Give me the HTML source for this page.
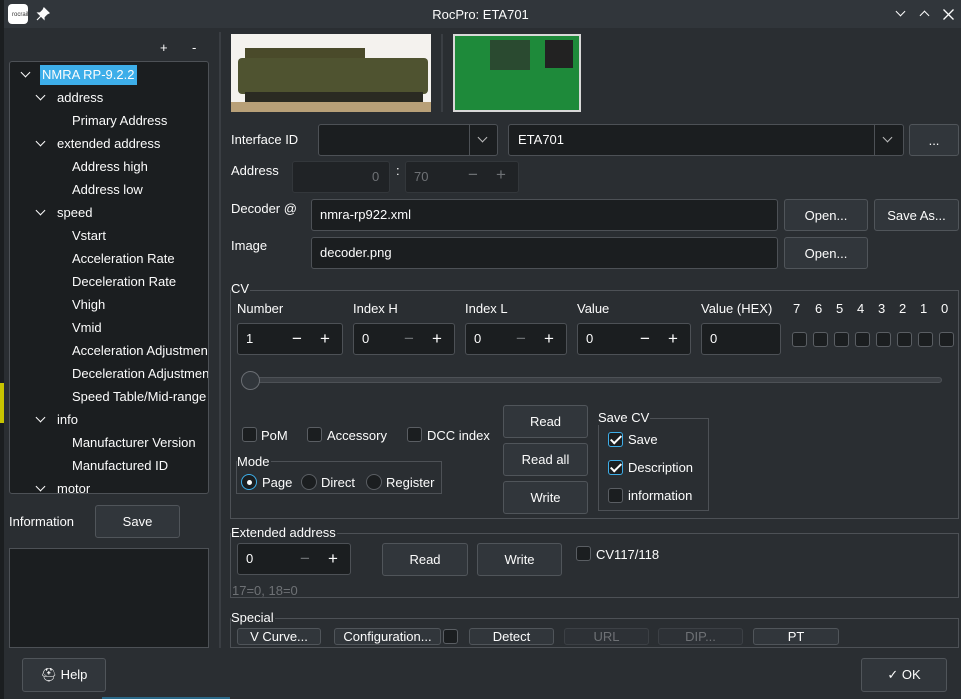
<!DOCTYPE html><html><head><meta charset="utf-8"><style>
*{box-sizing:border-box}
body{margin:0;width:961px;height:699px;background:#2a2e32;font-family:"Liberation Sans","DejaVu Sans",sans-serif;font-size:13px;color:#fcfcfc;position:relative;overflow:hidden}
.a{position:absolute}
.t{position:absolute;white-space:nowrap;line-height:16px}
.f{position:absolute;background:#1b1e20;border:1px solid #4d5156;border-radius:3px}
.fd{position:absolute;background:#202326;border:1px solid #33373b;border-radius:3px}
.b{position:absolute;background:#31363b;border:1px solid #50555a;border-radius:3px;display:flex;align-items:center;justify-content:center}
.g{position:absolute;border:1px solid #4d5156}
.gt{position:absolute;background:#2a2e32;padding-right:1px;line-height:14px}
.cb{position:absolute;width:15px;height:15px;background:#1b1e20;border:1px solid #5a5e63;border-radius:3px}
.ck{background:#1b1e20;border-color:#3daee9}
.ck:after{content:"";position:absolute;left:4px;top:0px;width:4px;height:9px;border:solid #fcfcfc;border-width:0 2px 2px 0;transform:rotate(45deg)}
.rd{position:absolute;width:16px;height:16px;border-radius:50%;background:#1b1e20;border:1px solid #5a5e63}
.ch{position:absolute;width:7px;height:7px;border:solid #fcfcfc;border-width:0 1px 1px 0;transform:rotate(45deg)}
.pm{position:absolute;color:#fcfcfc;font-size:17px;line-height:16px}
.dim{color:#6e7175}
</style></head><body>
<div class="a" style="left:0;top:0;width:4px;height:699px;background:#1b1e20"></div>
<div class="a" style="left:0;top:383px;width:4px;height:40px;background:#c8c400"></div>
<div class="a" style="left:4px;top:0;width:957px;height:28px;background:#31363b"></div>
<div class="a" style="left:8px;top:4px;width:20px;height:20px;background:#fff;border-radius:4px"></div>
<div class="t" style="left:12px;top:7px;font-size:6px;color:#333">rocrail</div>
<svg class="a" style="left:36px;top:7px" width="14" height="14" viewBox="0 0 14 14"><path d="M8 1 L13 6 L11 7 L8 10 L8 12 L2 6 L4 6 L7 3 Z M5 9 L1 13" fill="#fcfcfc" stroke="#fcfcfc" stroke-width="1.2"/></svg>
<div class="t" style="left:0;width:961px;text-align:center;top:7px">RocPro: ETA701</div>
<div class="ch" style="left:897px;top:8px"></div>
<div class="ch" style="left:921px;top:12px;transform:rotate(-135deg)"></div>
<svg class="a" style="left:943px;top:9px" width="11" height="11"><path d="M0.5 0.5 L10.5 10.5 M10.5 0.5 L0.5 10.5" stroke="#fcfcfc" stroke-width="1.3"/></svg>
<div class="t" style="left:160px;top:40px">+</div>
<div class="t" style="left:192px;top:40px">-</div>
<div class="a" style="left:9px;top:61px;width:200px;height:433px;background:#1b1e20;border:1px solid #4d5156;border-radius:3px;overflow:hidden">
<div class="a" style="left:30px;top:3px;width:97px;height:20px;background:#3daee9"></div>
<div class="ch" style="left:12px;top:7px"></div><div class="t" style="left:32px;top:5px">NMRA RP-9.2.2</div>
<div class="ch" style="left:27px;top:30px"></div><div class="t" style="left:47px;top:28px">address</div>
<div class="t" style="left:62px;top:51px">Primary Address</div>
<div class="ch" style="left:27px;top:76px"></div><div class="t" style="left:47px;top:74px">extended address</div>
<div class="t" style="left:62px;top:97px">Address high</div>
<div class="t" style="left:62px;top:120px">Address low</div>
<div class="ch" style="left:27px;top:145px"></div><div class="t" style="left:47px;top:143px">speed</div>
<div class="t" style="left:62px;top:166px">Vstart</div>
<div class="t" style="left:62px;top:189px">Acceleration Rate</div>
<div class="t" style="left:62px;top:212px">Deceleration Rate</div>
<div class="t" style="left:62px;top:235px">Vhigh</div>
<div class="t" style="left:62px;top:258px">Vmid</div>
<div class="t" style="left:62px;top:281px">Acceleration Adjustment</div>
<div class="t" style="left:62px;top:304px">Deceleration Adjustment</div>
<div class="t" style="left:62px;top:327px">Speed Table/Mid-range</div>
<div class="ch" style="left:27px;top:352px"></div><div class="t" style="left:47px;top:350px">info</div>
<div class="t" style="left:62px;top:373px">Manufacturer Version</div>
<div class="t" style="left:62px;top:396px">Manufactured ID</div>
<div class="ch" style="left:27px;top:421px"></div><div class="t" style="left:47px;top:419px">motor</div>
</div>
<div class="t" style="left:9px;top:514px">Information</div>
<div class="b" style="left:95px;top:505px;width:85px;height:33px">Save</div>
<div class="a" style="left:9px;top:548px;width:200px;height:100px;background:#1b1e20;border:1px solid #4d5156"></div>
<div class="a" style="left:219px;top:32px;width:2px;height:616px;background:#3a3e43"></div>
<div class="a" style="left:231px;top:34px;width:200px;height:78px;background:#f4f2ee"></div>
<div class="a" style="left:245px;top:48px;width:120px;height:12px;background:#4a4a2a"></div>
<div class="a" style="left:238px;top:58px;width:190px;height:36px;background:#4f5330;border-radius:4px"></div>
<div class="a" style="left:245px;top:92px;width:178px;height:10px;background:#2a2a22"></div>
<div class="a" style="left:231px;top:102px;width:200px;height:10px;background:#b8a078"></div>
<div class="a" style="left:441px;top:34px;width:2px;height:78px;background:#3a3e43"></div>
<div class="a" style="left:453px;top:34px;width:128px;height:78px;background:#1e8a3a;border:2px solid #d8d8d8"></div>
<div class="a" style="left:490px;top:40px;width:40px;height:30px;background:#2a4a30"></div>
<div class="a" style="left:545px;top:40px;width:28px;height:28px;background:#222"></div>
<div class="t" style="left:231px;top:132px">Interface ID</div>
<div class="f" style="left:318px;top:124px;width:180px;height:32px"></div>
<div class="a" style="left:469px;top:125px;width:1px;height:30px;background:#4d5156"></div>
<div class="ch" style="left:479px;top:134px;border-color:#bbb"></div>
<div class="f" style="left:508px;top:124px;width:396px;height:32px"></div>
<div class="t" style="left:518px;top:132px">ETA701</div>
<div class="a" style="left:874px;top:125px;width:1px;height:30px;background:#4d5156"></div>
<div class="ch" style="left:884px;top:134px;border-color:#bbb"></div>
<div class="b" style="left:909px;top:124px;width:50px;height:32px">...</div>
<div class="t" style="left:231px;top:163px">Address</div>
<div class="fd" style="left:292px;top:161px;width:98px;height:32px"></div>
<div class="t dim" style="left:372px;top:169px">0</div>
<div class="t" style="left:396px;top:163px">:</div>
<div class="fd" style="left:405px;top:161px;width:114px;height:32px"></div>
<div class="t dim" style="left:414px;top:169px">70</div>
<div class="t dim" style="left:468px;top:167px;font-size:17px">−</div>
<div class="t dim" style="left:496px;top:167px;font-size:17px">+</div>
<div class="t" style="left:231px;top:201px">Decoder @</div>
<div class="f" style="left:311px;top:199px;width:467px;height:32px"></div>
<div class="t" style="left:320px;top:207px">nmra-rp922.xml</div>
<div class="b" style="left:784px;top:199px;width:84px;height:32px">Open...</div>
<div class="b" style="left:874px;top:199px;width:85px;height:32px">Save As...</div>
<div class="t" style="left:231px;top:238px">Image</div>
<div class="f" style="left:311px;top:237px;width:467px;height:32px"></div>
<div class="t" style="left:320px;top:245px">decoder.png</div>
<div class="b" style="left:784px;top:237px;width:84px;height:32px">Open...</div>
<div class="g" style="left:230px;top:290px;width:729px;height:229px"></div>
<div class="gt" style="left:231px;top:282px">CV</div>
<div class="t" style="left:237px;top:301px">Number</div>
<div class="t" style="left:353px;top:301px">Index H</div>
<div class="t" style="left:465px;top:301px">Index L</div>
<div class="t" style="left:577px;top:301px">Value</div>
<div class="t" style="left:701px;top:301px">Value (HEX)</div>
<div class="f" style="left:237px;top:323px;width:106px;height:32px"></div><div class="t" style="left:246px;top:331px">1</div>
<div class="pm" style="left:292px;top:331px">−</div><div class="pm" style="left:320px;top:331px">+</div>
<div class="f" style="left:353px;top:323px;width:102px;height:32px"></div><div class="t" style="left:362px;top:331px">0</div>
<div class="pm dim" style="left:404px;top:331px">−</div><div class="pm" style="left:432px;top:331px">+</div>
<div class="f" style="left:465px;top:323px;width:102px;height:32px"></div><div class="t" style="left:474px;top:331px">0</div>
<div class="pm dim" style="left:516px;top:331px">−</div><div class="pm" style="left:544px;top:331px">+</div>
<div class="f" style="left:577px;top:323px;width:114px;height:32px"></div><div class="t" style="left:586px;top:331px">0</div>
<div class="pm" style="left:640px;top:331px">−</div><div class="pm" style="left:668px;top:331px">+</div>
<div class="f" style="left:701px;top:323px;width:80px;height:32px"></div><div class="t" style="left:710px;top:331px">0</div>
<div class="t" style="left:793px;top:301px">7</div><div class="t" style="left:815px;top:301px">6</div><div class="t" style="left:836px;top:301px">5</div><div class="t" style="left:857px;top:301px">4</div><div class="t" style="left:878px;top:301px">3</div><div class="t" style="left:899px;top:301px">2</div><div class="t" style="left:920px;top:301px">1</div><div class="t" style="left:941px;top:301px">0</div>
<div class="cb" style="left:792px;top:332px"></div><div class="cb" style="left:813px;top:332px"></div><div class="cb" style="left:834px;top:332px"></div><div class="cb" style="left:855px;top:332px"></div><div class="cb" style="left:876px;top:332px"></div><div class="cb" style="left:897px;top:332px"></div><div class="cb" style="left:918px;top:332px"></div><div class="cb" style="left:939px;top:332px"></div>
<div class="a" style="left:242px;top:377px;width:700px;height:6px;background:#3b3f44;border:1px solid #4d5156;border-radius:3px"></div>
<div class="a" style="left:241px;top:371px;width:19px;height:19px;border-radius:50%;background:#31363b;border:1px solid #6a6e73"></div>
<div class="cb" style="left:242px;top:427px"></div><div class="t" style="left:261px;top:428px">PoM</div>
<div class="cb" style="left:307px;top:427px"></div><div class="t" style="left:327px;top:428px">Accessory</div>
<div class="cb" style="left:407px;top:427px"></div><div class="t" style="left:427px;top:428px">DCC index</div>
<div class="g" style="left:236px;top:461px;width:206px;height:33px"></div>
<div class="gt" style="left:237px;top:455px">Mode</div>
<div class="rd" style="left:241px;top:474px;border-color:#3daee9"></div><div class="a" style="left:247px;top:480px;width:5px;height:5px;border-radius:50%;background:#fcfcfc"></div>
<div class="t" style="left:262px;top:475px">Page</div>
<div class="rd" style="left:301px;top:474px"></div><div class="t" style="left:321px;top:475px">Direct</div>
<div class="rd" style="left:366px;top:474px"></div><div class="t" style="left:386px;top:475px">Register</div>
<div class="b" style="left:503px;top:405px;width:85px;height:33px">Read</div>
<div class="b" style="left:503px;top:443px;width:85px;height:33px">Read all</div>
<div class="b" style="left:503px;top:481px;width:85px;height:33px">Write</div>
<div class="g" style="left:598px;top:418px;width:111px;height:93px"></div>
<div class="gt" style="left:598px;top:411px">Save CV</div>
<div class="cb ck" style="left:608px;top:432px"></div><div class="t" style="left:628px;top:432px">Save</div>
<div class="cb ck" style="left:608px;top:460px"></div><div class="t" style="left:628px;top:460px">Description</div>
<div class="cb" style="left:608px;top:488px"></div><div class="t" style="left:628px;top:488px">information</div>
<div class="g" style="left:230px;top:533px;width:729px;height:65px"></div>
<div class="gt" style="left:231px;top:526px">Extended address</div>
<div class="f" style="left:237px;top:543px;width:114px;height:32px"></div><div class="t" style="left:246px;top:551px">0</div>
<div class="pm dim" style="left:300px;top:551px">−</div><div class="pm" style="left:328px;top:551px">+</div>
<div class="b" style="left:382px;top:543px;width:86px;height:33px">Read</div>
<div class="b" style="left:477px;top:543px;width:85px;height:33px">Write</div>
<div class="cb" style="left:576px;top:546px"></div><div class="t" style="left:596px;top:547px">CV117/118</div>
<div class="t dim" style="left:232px;top:583px">17=0, 18=0</div>
<div class="g" style="left:230px;top:618px;width:729px;height:30px"></div>
<div class="gt" style="left:231px;top:611px">Special</div>
<div class="b" style="left:237px;top:628px;width:84px;height:17px">V Curve...</div>
<div class="b" style="left:334px;top:628px;width:107px;height:17px">Configuration...</div>
<div class="cb" style="left:443px;top:629px"></div>
<div class="b" style="left:469px;top:628px;width:85px;height:17px">Detect</div>
<div class="b dim" style="left:564px;top:628px;width:85px;height:17px;background:#2d3136;border-color:#3c4045">URL</div>
<div class="b dim" style="left:658px;top:628px;width:85px;height:17px;background:#2d3136;border-color:#3c4045">DIP...</div>
<div class="b" style="left:753px;top:628px;width:86px;height:17px">PT</div>
<div class="b" style="left:22px;top:658px;width:84px;height:34px">⛑ Help</div>
<div class="b" style="left:861px;top:658px;width:86px;height:34px">✓ OK</div>
<div class="a" style="left:102px;top:697px;width:128px;height:2px;background:#2a6a8a"></div>
</body></html>
